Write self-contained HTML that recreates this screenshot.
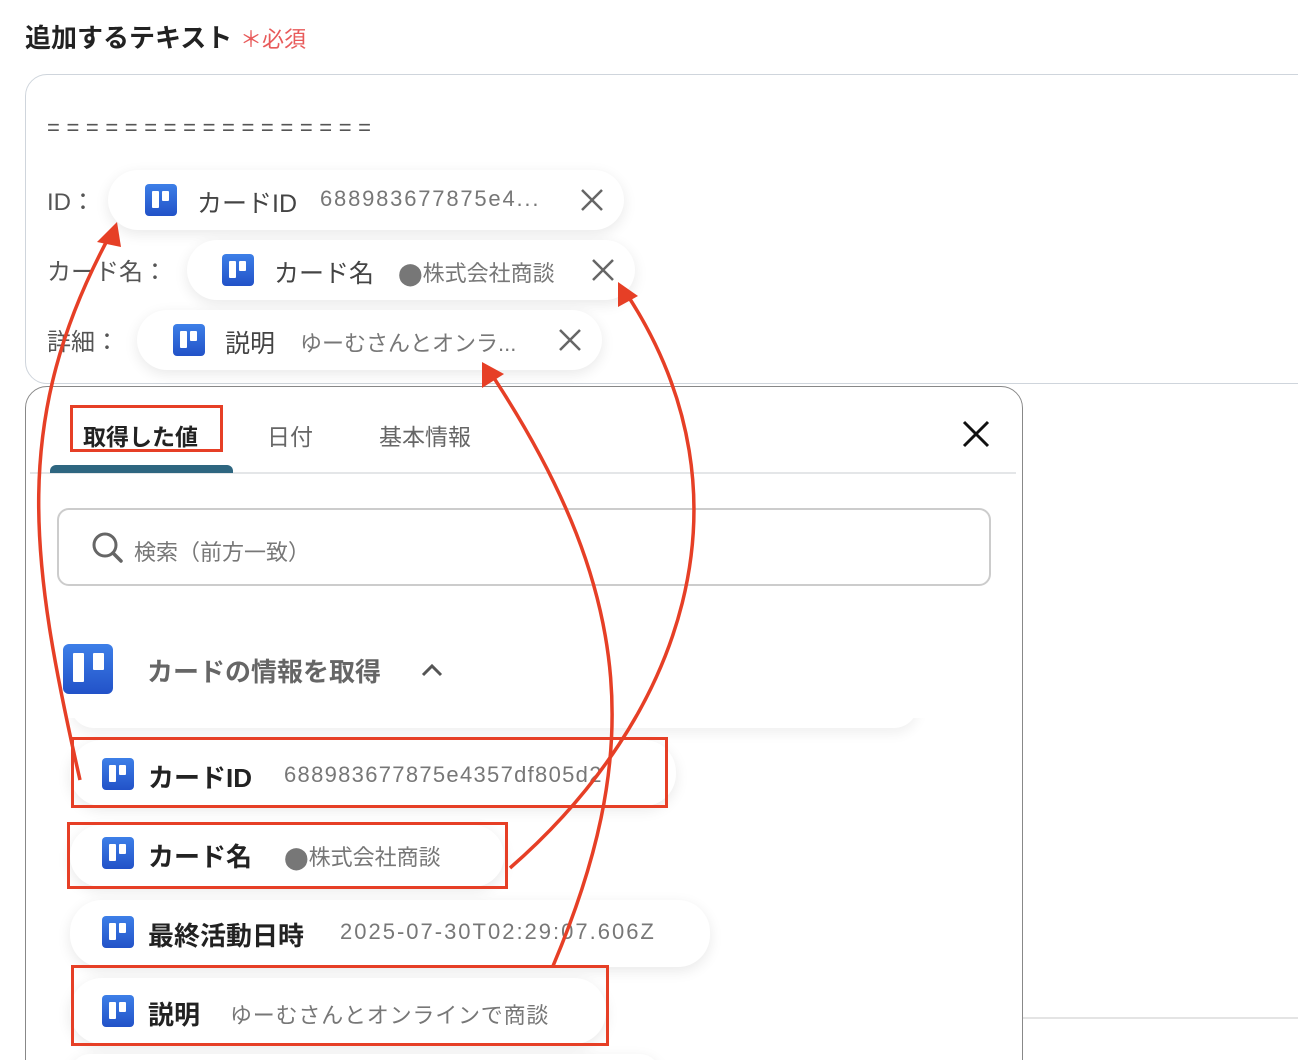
<!DOCTYPE html>
<html><head><meta charset="utf-8"><style>
*{margin:0;padding:0;box-sizing:border-box}
html,body{width:1298px;height:1060px;overflow:hidden}
body{background:#fff;position:relative;font-family:"Liberation Sans","Noto Sans CJK JP",sans-serif;color:#333}
.a{position:absolute;white-space:nowrap}
.chip{position:absolute;background:#fff;border-radius:32px;box-shadow:0 4px 14px rgba(0,0,0,.09)}
.ic{position:absolute;width:32px;height:32px;border-radius:4px;background:linear-gradient(#3d7fe8,#2252c8)}
.ic:before{content:"";position:absolute;left:7px;top:7px;width:7px;height:17px;background:#fff;border-radius:1px}
.ic:after{content:"";position:absolute;left:17px;top:7px;width:7px;height:10px;background:#fff;border-radius:1px}
.rb{position:absolute;border:3px solid #e63f26}
.x{position:absolute}
</style></head><body>
<div class="a" style="left:25px;top:18px;font-size:26px;font-weight:bold;color:#222">追加するテキスト</div>
<div class="a" style="left:240px;top:22px;font-size:22px;color:#e85a5a">＊必須</div>

<div class="a" style="left:25px;top:74px;width:1300px;height:310px;border:1.5px solid #cfd5dc;border-radius:22px"></div>
<div class="a" style="left:47px;top:115px;font-size:22px;color:#555;letter-spacing:6.6px">=================</div>

<div class="a" style="left:47px;top:182px;font-size:24px;color:#555">ID：</div>
<div class="chip" style="left:108px;top:170px;width:516px;height:60px"></div>
<div class="ic" style="left:145px;top:184px"></div>
<div class="a" style="left:197px;top:184px;font-size:25px;color:#444">カードID</div>
<div class="a" style="left:320px;top:186px;font-size:22px;color:#777;letter-spacing:1.8px">688983677875e4...</div>
<svg class="x" style="left:580px;top:188px" width="24" height="24"><path d="M2 2L22 22M22 2L2 22" stroke="#666" stroke-width="2.5"/></svg>

<div class="a" style="left:47px;top:252px;font-size:24px;color:#555">カード名：</div>
<div class="chip" style="left:187px;top:240px;width:448px;height:60px"></div>
<div class="ic" style="left:222px;top:254px"></div>
<div class="a" style="left:274px;top:254px;font-size:25px;color:#444">カード名</div>
<div class="a" style="left:398px;top:256px;font-size:22px;color:#777">⬤株式会社商談</div>
<svg class="x" style="left:591px;top:258px" width="24" height="24"><path d="M2 2L22 22M22 2L2 22" stroke="#666" stroke-width="2.5"/></svg>

<div class="a" style="left:47px;top:322px;font-size:24px;color:#555">詳細：</div>
<div class="chip" style="left:137px;top:310px;width:465px;height:60px"></div>
<div class="ic" style="left:173px;top:324px"></div>
<div class="a" style="left:225px;top:324px;font-size:25px;color:#444">説明</div>
<div class="a" style="left:300px;top:326px;font-size:22px;color:#777">ゆーむさんとオンラ...</div>
<svg class="x" style="left:558px;top:328px" width="24" height="24"><path d="M2 2L22 22M22 2L2 22" stroke="#666" stroke-width="2.5"/></svg>

<div class="a" style="left:1023px;top:1017px;width:280px;height:2px;background:#e4e4e4"></div>
<div class="a" style="left:25px;top:386px;width:998px;height:700px;border:1.5px solid #888;border-radius:22px;background:#fff"></div>

<div class="a" style="left:83px;top:418px;font-size:23px;font-weight:bold;color:#222">取得した値</div>
<div class="rb" style="left:70px;top:405px;width:153px;height:47px"></div>
<div class="a" style="left:267px;top:418px;font-size:23px;color:#666">日付</div>
<div class="a" style="left:379px;top:418px;font-size:23px;color:#666">基本情報</div>
<svg class="x" style="left:962px;top:420px" width="28" height="28"><path d="M2 2L26 26M26 2L2 26" stroke="#111" stroke-width="3"/></svg>
<div class="a" style="left:30px;top:472px;width:986px;height:2px;background:#e4e6e8"></div>
<div class="a" style="left:50px;top:465px;width:183px;height:8px;background:#2e6680;border-radius:6px 6px 0 0"></div>

<div class="a" style="left:57px;top:508px;width:934px;height:78px;border:2px solid #ccc;border-radius:12px"></div>
<svg class="a" style="left:90px;top:530px" width="36" height="36" viewBox="0 0 36 36"><circle cx="15" cy="15" r="11" fill="none" stroke="#666" stroke-width="3"/><path d="M23 23l8 8" stroke="#666" stroke-width="3.5" stroke-linecap="round"/></svg>
<div class="a" style="left:134px;top:535px;font-size:22px;color:#777">検索（前方一致）</div>

<div class="chip" style="left:70px;top:680px;width:848px;height:48px;box-shadow:0 6px 12px rgba(0,0,0,.06)"></div>
<div class="a" style="left:60px;top:630px;width:880px;height:88px;background:#fff"></div>
<div class="a" style="left:63px;top:644px;width:50px;height:50px;border-radius:6px;background:linear-gradient(#3d7fe8,#2252c8)"></div>
<div class="a" style="left:73px;top:653px;width:11px;height:29px;background:#fff;border-radius:1px"></div>
<div class="a" style="left:93px;top:653px;width:11px;height:17px;background:#fff;border-radius:1px"></div>
<div class="a" style="left:147px;top:652px;font-size:26px;font-weight:bold;color:#666">カードの情報を取得</div>
<svg class="a" style="left:420px;top:660px" width="24" height="20"><path d="M3 15l9-9 9 9" fill="none" stroke="#555" stroke-width="3"/></svg>

<div class="chip" style="left:70px;top:740px;width:606px;height:66px"></div>
<div class="ic" style="left:102px;top:758px"></div>
<div class="a" style="left:148px;top:758px;font-size:26px;font-weight:bold;color:#222">カードID</div>
<div class="a" style="left:284px;top:762px;font-size:22px;color:#777;letter-spacing:1.3px">688983677875e4357df805d2</div>

<div class="chip" style="left:70px;top:825px;width:434px;height:62px"></div>
<div class="ic" style="left:102px;top:837px"></div>
<div class="a" style="left:148px;top:837px;font-size:26px;font-weight:bold;color:#222">カード名</div>
<div class="a" style="left:284px;top:840px;font-size:22px;color:#777">⬤株式会社商談</div>

<div class="chip" style="left:70px;top:900px;width:640px;height:67px"></div>
<div class="ic" style="left:102px;top:916px"></div>
<div class="a" style="left:148px;top:916px;font-size:26px;font-weight:bold;color:#222">最終活動日時</div>
<div class="a" style="left:340px;top:919px;font-size:22px;color:#777;letter-spacing:2px">2025-07-30T02:29:07.606Z</div>

<div class="chip" style="left:70px;top:978px;width:536px;height:66px"></div>
<div class="ic" style="left:102px;top:995px"></div>
<div class="a" style="left:148px;top:995px;font-size:26px;font-weight:bold;color:#222">説明</div>
<div class="a" style="left:230px;top:998px;font-size:22px;color:#777;letter-spacing:0.8px">ゆーむさんとオンラインで商談</div>
<div class="chip" style="left:70px;top:1054px;width:590px;height:40px"></div>

<div class="rb" style="left:71px;top:737px;width:597px;height:71px"></div>
<div class="rb" style="left:67px;top:822px;width:441px;height:67px"></div>
<div class="rb" style="left:71px;top:965px;width:538px;height:81px"></div>

<svg class="a" style="left:0;top:0" width="1298" height="1060">
<g fill="none" stroke="#e63f26" stroke-width="3.5">
<path d="M80 780 C 30 560, 10 420, 110 235"/>
<path d="M510 868 C 680 720, 760 500, 628 296"/>
<path d="M553 966 C 640 760, 640 600, 492 375"/>
</g>
<g fill="#e63f26">
<polygon points="117,222 97,242 121,247"/>
<polygon points="618,282 618,307 638,296"/>
<polygon points="482,362 482,388 504,374"/>
</g>
</svg>
</body></html>
